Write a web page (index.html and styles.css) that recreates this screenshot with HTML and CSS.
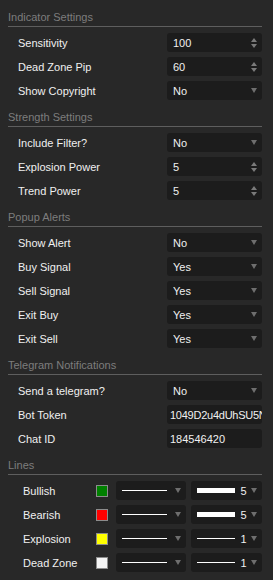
FILE: index.html
```html
<!DOCTYPE html>
<html lang="en">
<head>
    <meta charset="UTF-8">
    <meta name="viewport" content="width=device-width, initial-scale=1.0">
    <title>Indicator Settings</title>
    <link rel="stylesheet" href="styles.css">
</head>
<body>
    <div class="panel">
        <section class="group">
            <div class="group-title">Indicator Settings</div>
            <div class="rows">
                <div class="row">
                    <span class="label">Sensitivity</span>
                    <div class="field spin"><span class="value">100</span><span class="spinner"><i class="up"></i><i class="down"></i></span></div>
                </div>
                <div class="row">
                    <span class="label">Dead Zone Pip</span>
                    <div class="field spin"><span class="value">60</span><span class="spinner"><i class="up"></i><i class="down"></i></span></div>
                </div>
                <div class="row">
                    <span class="label">Show Copyright</span>
                    <div class="field select"><span class="value">No</span><i class="caret"></i></div>
                </div>
            </div>
        </section>

        <section class="group">
            <div class="group-title">Strength Settings</div>
            <div class="rows">
                <div class="row">
                    <span class="label">Include Filter?</span>
                    <div class="field select"><span class="value">No</span><i class="caret"></i></div>
                </div>
                <div class="row">
                    <span class="label">Explosion Power</span>
                    <div class="field spin"><span class="value">5</span><span class="spinner"><i class="up"></i><i class="down"></i></span></div>
                </div>
                <div class="row">
                    <span class="label">Trend Power</span>
                    <div class="field spin"><span class="value">5</span><span class="spinner"><i class="up"></i><i class="down"></i></span></div>
                </div>
            </div>
        </section>

        <section class="group">
            <div class="group-title">Popup Alerts</div>
            <div class="rows">
                <div class="row">
                    <span class="label">Show Alert</span>
                    <div class="field select"><span class="value">No</span><i class="caret"></i></div>
                </div>
                <div class="row">
                    <span class="label">Buy Signal</span>
                    <div class="field select"><span class="value">Yes</span><i class="caret"></i></div>
                </div>
                <div class="row">
                    <span class="label">Sell Signal</span>
                    <div class="field select"><span class="value">Yes</span><i class="caret"></i></div>
                </div>
                <div class="row">
                    <span class="label">Exit Buy</span>
                    <div class="field select"><span class="value">Yes</span><i class="caret"></i></div>
                </div>
                <div class="row">
                    <span class="label">Exit Sell</span>
                    <div class="field select"><span class="value">Yes</span><i class="caret"></i></div>
                </div>
            </div>
        </section>

        <section class="group">
            <div class="group-title">Telegram Notifications</div>
            <div class="rows">
                <div class="row">
                    <span class="label">Send a telegram?</span>
                    <div class="field select"><span class="value">No</span><i class="caret"></i></div>
                </div>
                <div class="row">
                    <span class="label">Bot Token</span>
                    <div class="field text"><span class="value token">1049D2u4dUhSU5N</span></div>
                </div>
                <div class="row">
                    <span class="label">Chat ID</span>
                    <div class="field text"><span class="value">184546420</span></div>
                </div>
            </div>
        </section>

        <section class="group">
            <div class="group-title">Lines</div>
            <div class="rows">
                <div class="row line-row">
                    <span class="label">Bullish</span>
                    <span class="swatch green"></span>
                    <div class="field style"><span class="stroke"></span><i class="caret"></i></div>
                    <div class="field width"><span class="stroke thick"></span><span class="num">5</span><i class="caret"></i></div>
                </div>
                <div class="row line-row">
                    <span class="label">Bearish</span>
                    <span class="swatch red"></span>
                    <div class="field style"><span class="stroke"></span><i class="caret"></i></div>
                    <div class="field width"><span class="stroke thick"></span><span class="num">5</span><i class="caret"></i></div>
                </div>
                <div class="row line-row">
                    <span class="label">Explosion</span>
                    <span class="swatch yellow"></span>
                    <div class="field style"><span class="stroke"></span><i class="caret"></i></div>
                    <div class="field width"><span class="stroke"></span><span class="num">1</span><i class="caret"></i></div>
                </div>
                <div class="row line-row">
                    <span class="label">Dead Zone</span>
                    <span class="swatch white"></span>
                    <div class="field style"><span class="stroke"></span><i class="caret"></i></div>
                    <div class="field width"><span class="stroke"></span><span class="num">1</span><i class="caret"></i></div>
                </div>
            </div>
        </section>
    </div>
</body>
</html>
```

FILE: styles.css
```css
body {
    margin: 0;
    background: #282828;
    color: #f0f0f0;
    font-family: "Liberation Sans", Arial, sans-serif;
    font-size: 11px;
}

.panel {
    padding: 0 11px 0 8px;
}

.group {
    padding-top: 6px;
}

.group-title {
    height: 20px;
    line-height: 22px;
    color: #7d7d7d;
    border-bottom: 1px solid #5e5e5e;
}

.rows {
    display: flex;
    flex-direction: column;
    gap: 5px;
    padding-top: 6px;
}

.row {
    display: flex;
    align-items: center;
    justify-content: space-between;
    height: 19px;
    padding-left: 10px;
}

.label {
    padding-top: 2px;
    line-height: 17px;
    white-space: nowrap;
}

.field {
    display: flex;
    align-items: center;
    width: 95px;
    height: 19px;
    box-sizing: border-box;
    padding: 0 5px 0 6px;
    background: #1c1c1c;
    border-radius: 3px;
    overflow: hidden;
}

.field .value {
    flex: 1;
    padding-top: 2px;
    line-height: 17px;
    white-space: nowrap;
    overflow: hidden;
}

.field.text {
    padding: 0 0 0 3px;
}

.field .value.token {
    letter-spacing: -0.25px;
}

/* little up/down arrows of the number boxes */
.spinner {
    display: flex;
    flex-direction: column;
    gap: 2px;
}

.spinner i {
    width: 0;
    height: 0;
    border-left: 3px solid transparent;
    border-right: 3px solid transparent;
}

.spinner .up {
    border-bottom: 4px solid #7a7a7a;
}

.spinner .down {
    border-top: 4px solid #7a7a7a;
}

.caret {
    width: 0;
    height: 0;
    border-left: 3px solid transparent;
    border-right: 3px solid transparent;
    border-top: 5px solid #6e6e6e;
}

/* Lines section */
.row.line-row {
    justify-content: flex-start;
    padding-left: 15px;
}

.line-row .label {
    width: 73px;
}

.swatch {
    width: 12px;
    height: 12px;
    box-sizing: border-box;
    border: 1px solid #8c8c8c;
}

.swatch.green { background: #008000; }
.swatch.red { background: #ff0000; }
.swatch.yellow { background: #ffff00; }
.swatch.white { background: #f4f4f4; }

.field.style {
    width: 70px;
    margin-left: 8px;
    padding: 0 5px 0 6px;
}

.field.width {
    width: 71px;
    margin-left: 5px;
    padding: 0 5px 0 6px;
}

.stroke {
    height: 1px;
    background: #ffffff;
}

.field.style .stroke {
    width: 49px;
    margin-right: 8px;
}

.field.width .stroke {
    width: 38px;
}

.field.width .stroke.thick {
    height: 5px;
}

.num {
    width: 11px;
    margin-left: 3px;
    margin-right: 2px;
    padding-top: 2px;
    line-height: 17px;
    text-align: center;
}
```
